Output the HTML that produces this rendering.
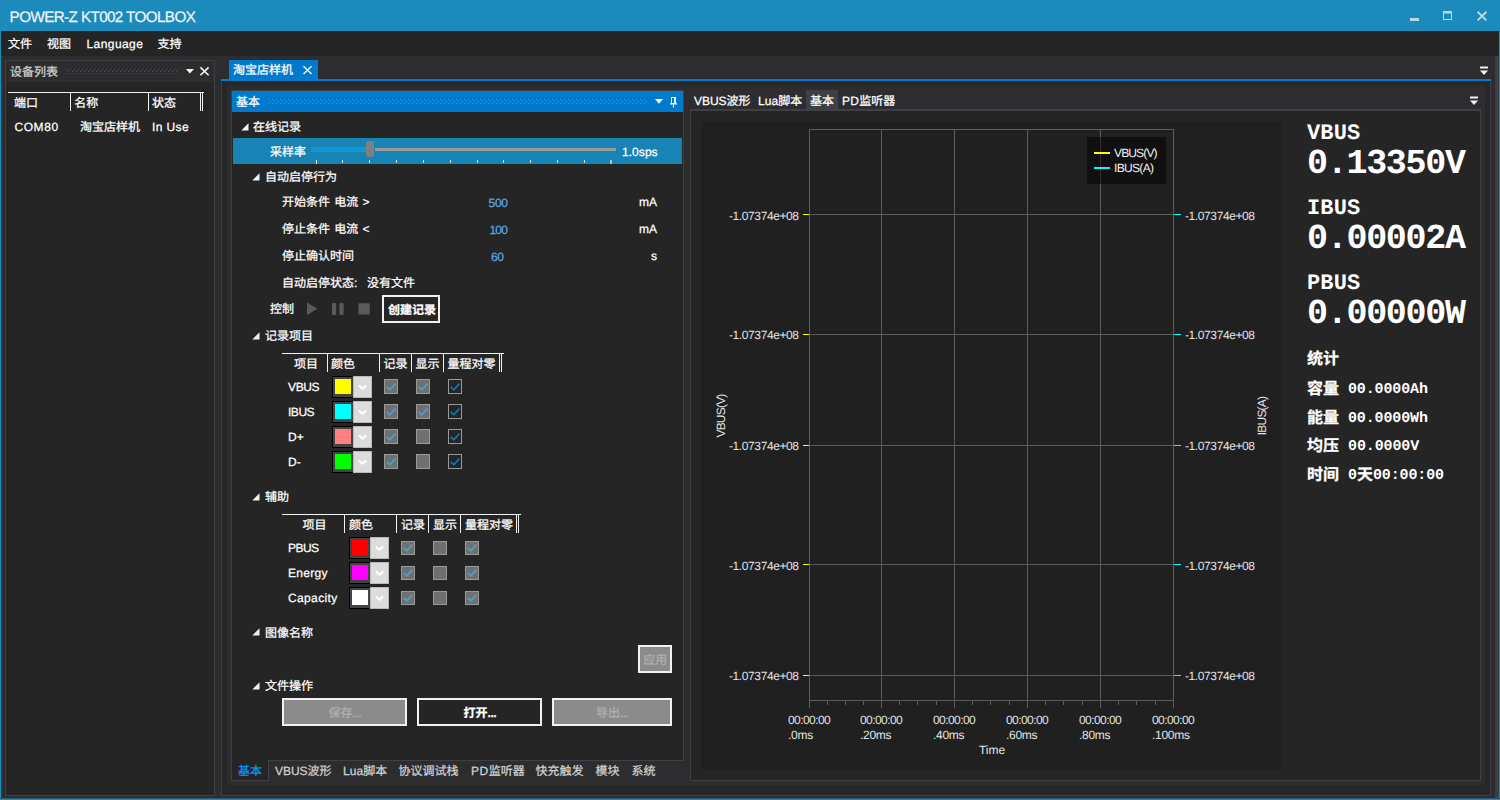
<!DOCTYPE html>
<html lang="zh-CN"><head><meta charset="utf-8"><title>POWER-Z KT002 TOOLBOX</title>
<style>
html,body{margin:0;padding:0}
body{width:1500px;height:800px;overflow:hidden;background:#2d2d30;position:relative;font-family:"Liberation Sans","Noto Sans CJK SC",sans-serif;font-size:12px;color:#f1f1f1;text-rendering:geometricPrecision;-webkit-font-smoothing:antialiased}
body div{position:absolute;box-sizing:border-box}
.t{white-space:nowrap;line-height:0;-webkit-text-stroke:0.25px currentColor}
.z{letter-spacing:0}
.b{font-weight:bold;font-family:"Liberation Sans","Noto Sans CJK SC",sans-serif}
svg.ic{position:absolute;overflow:visible}
.s,.S{display:inline-block;width:0;height:24px}
.S{height:40px}
</style></head><body>
<div style="left:0px;top:0px;width:1500px;height:31px;background:#1c8abb;"></div>
<div class="t" style="top:-2px;font-size:15.2px;color:#eef5f9;left:9.6px;letter-spacing:-0.58px;"><i class="s"></i>POWER-Z KT002 TOOLBOX</div>
<svg class="ic" style="left:1405px;top:6px" width="90" height="20" viewBox="1405 6 90 20"><rect x="1410" y="18" width="9" height="3" fill="#b4daeb"/><path d="M1443 11h9v9h-9z M1444 13.5v5.5h7v-5.5z" fill="#b4daeb" fill-rule="evenodd"/><path d="M1477.6 11.8l8.8 8.6M1486.4 11.8l-8.8 8.6" stroke="#b4daeb" stroke-width="2" fill="none"/></svg>
<div style="left:1px;top:31px;width:1498px;height:25px;background:#252526;"></div>
<div class="t" style="top:24px;font-size:12px;color:#ffffff;left:8px;"><i class="s"></i>文件</div>
<div class="t" style="top:24px;font-size:12px;color:#ffffff;left:47px;"><i class="s"></i>视图</div>
<div class="t" style="top:24px;font-size:12px;color:#ffffff;left:86.5px;letter-spacing:0.42px;"><i class="s"></i>Language</div>
<div class="t" style="top:24px;font-size:12px;color:#ffffff;left:157.5px;"><i class="s"></i>支持</div>
<div style="left:0px;top:31px;width:1px;height:769px;background:#1c8abb;"></div>
<div style="left:1px;top:56px;width:1px;height:743px;background:#2b4350;"></div>
<div style="left:1499px;top:31px;width:1px;height:769px;background:#1c8abb;"></div>
<div style="left:0px;top:798px;width:1500px;height:1px;background:#265a75;"></div>
<div style="left:0px;top:799px;width:1500px;height:1px;background:#1c8abb;"></div>
<div style="left:1495px;top:56px;width:4px;height:742px;background:#3e3e40;"></div>
<div style="left:5px;top:60px;width:210px;height:736px;background:#252526;border:1px solid #3f3f46;"></div>
<div style="left:6px;top:61px;width:208px;height:21px;background:#2d2d30;"></div>
<div class="t" style="top:52px;font-size:12px;color:#d0d0d0;left:10px;"><i class="s"></i>设备列表</div>
<div style="left:66px;top:69px;width:111px;height:5px;background:linear-gradient(90deg,#515156 1px,transparent 1px) 0 0/4px 1px repeat-x,linear-gradient(90deg,#515156 1px,transparent 1px) 2px 2px/4px 1px repeat-x,linear-gradient(90deg,#515156 1px,transparent 1px) 0 4px/4px 1px repeat-x;"></div>
<svg class="ic" style="left:184px;top:64px" width="28" height="14" viewBox="184 64 28 14"><path d="M185.8 69h8.2l-4.1 4.4z" fill="#f4f4f4"/><path d="M200.4 67.4l8.2 7.8M208.6 67.4l-8.2 7.8" stroke="#f6f6f6" stroke-width="1.55" fill="none"/></svg>
<div style="left:8px;top:92px;width:196px;height:1px;background:#f1f1f1;"></div>
<div style="left:70px;top:92px;width:1px;height:19px;background:#f1f1f1;"></div>
<div style="left:148px;top:92px;width:1px;height:19px;background:#f1f1f1;"></div>
<div style="left:200px;top:92px;width:1px;height:19px;background:#f1f1f1;"></div>
<div style="left:202px;top:92px;width:1px;height:19px;background:#f1f1f1;"></div>
<div class="t" style="top:83px;font-size:12px;color:#ffffff;left:14px;"><i class="s"></i>端口</div>
<div class="t" style="top:83px;font-size:12px;color:#ffffff;left:74.3px;"><i class="s"></i>名称</div>
<div class="t" style="top:83px;font-size:12px;color:#ffffff;left:152px;"><i class="s"></i>状态</div>
<div class="t" style="top:107px;font-size:12px;color:#ffffff;left:14.4px;letter-spacing:0.61px;"><i class="s"></i>COM80</div>
<div class="t" style="top:107px;font-size:12px;color:#ffffff;left:80px;"><i class="s"></i>淘宝店样机</div>
<div class="t" style="top:107px;font-size:12px;color:#ffffff;left:152px;letter-spacing:0.38px;"><i class="s"></i>In Use</div>
<div style="left:229px;top:60px;width:89px;height:19px;background:#007acc;"></div>
<div class="t" style="top:50px;font-size:12px;color:#ffffff;left:233px;"><i class="s"></i>淘宝店样机</div>
<svg class="ic" style="left:301px;top:64px" width="14" height="14" viewBox="301 64 14 14"><path d="M303.5 66.3l8 7.7M311.5 66.3l-8 7.7" stroke="#e4f1fb" stroke-width="1.5" fill="none"/></svg>
<div style="left:221px;top:79px;width:1270px;height:2px;background:#007acc;"></div>
<div style="left:221px;top:81px;width:1270px;height:715px;background:#272729;border:1px solid #3f3f46;border-top:none;"></div>
<div style="left:227px;top:86px;width:1258px;height:699px;background:#2d2d30;"></div>
<svg class="ic" style="left:1479px;top:66px" width="10" height="10" viewBox="0 0 10 10"><rect x="1" y="0.5" width="8" height="2" fill="#f1f1f1"/><path d="M1 4.6h8l-4 4.4z" fill="#f1f1f1"/></svg>
<div style="left:231px;top:90px;width:453px;height:671px;background:#252526;border:1px solid #3f3f46;"></div>
<div style="left:232px;top:91px;width:451px;height:21px;background:#007acc;"></div>
<div class="t" style="top:82px;font-size:12px;color:#ffffff;left:236px;"><i class="s"></i>基本</div>
<div style="left:268px;top:99px;width:380px;height:5px;background:linear-gradient(90deg,#3d98d8 1px,transparent 1px) 0 0/4px 1px repeat-x,linear-gradient(90deg,#3d98d8 1px,transparent 1px) 2px 2px/4px 1px repeat-x,linear-gradient(90deg,#3d98d8 1px,transparent 1px) 0 4px/4px 1px repeat-x;"></div>
<svg class="ic" style="left:652px;top:94px" width="30" height="16" viewBox="652 94 30 16"><path d="M655 99h8l-4 4.7z" fill="#fff"/><path d="M671 97h5v6.2h1v1.3h-3v3h-1v-3h-3v-1.3h1z M672 98v5h2v-5z" fill="#fff" fill-rule="evenodd"/></svg>
<svg class="ic" style="left:241px;top:122.6px" width="8" height="8" viewBox="0 0 8 8"><path d="M7.5 0.3V7.5H0.3z" fill="#f1f1f1"/></svg>
<div class="t" style="top:107px;font-size:12px;color:#ffffff;left:253px;"><i class="s"></i>在线记录</div>
<div style="left:233px;top:138px;width:449px;height:26px;background:#1883b5;"></div>
<div class="t" style="top:132px;font-size:12px;color:#ffffff;left:270px;"><i class="s"></i>采样率</div>
<div style="left:375px;top:148px;width:241px;height:3px;background:#9a9a9a;"></div>
<div style="left:311px;top:147px;width:55px;height:5px;background:#1296d4;"></div>
<div style="left:366px;top:141px;width:8px;height:16px;background:#808080;border-radius:2.5px;"></div>
<div style="left:316px;top:160px;width:1px;height:4px;background:#e6eef2;"></div>
<div style="left:342px;top:160px;width:1px;height:3px;background:#cfe3ee;"></div>
<div style="left:369px;top:160px;width:1px;height:3px;background:#cfe3ee;"></div>
<div style="left:396px;top:160px;width:1px;height:3px;background:#cfe3ee;"></div>
<div style="left:423px;top:160px;width:1px;height:3px;background:#cfe3ee;"></div>
<div style="left:450px;top:160px;width:1px;height:3px;background:#cfe3ee;"></div>
<div style="left:477px;top:160px;width:1px;height:3px;background:#cfe3ee;"></div>
<div style="left:503px;top:160px;width:1px;height:3px;background:#cfe3ee;"></div>
<div style="left:530px;top:160px;width:1px;height:3px;background:#cfe3ee;"></div>
<div style="left:557px;top:160px;width:1px;height:3px;background:#cfe3ee;"></div>
<div style="left:584px;top:160px;width:1px;height:3px;background:#cfe3ee;"></div>
<div style="left:610px;top:160px;width:2px;height:4px;background:#a9c4d2;"></div>
<div class="t" style="top:132px;font-size:12px;color:#ffffff;left:622px;letter-spacing:0.05px;"><i class="s"></i>1.0sps</div>
<svg class="ic" style="left:252px;top:173px" width="8" height="8" viewBox="0 0 8 8"><path d="M7.5 0.3V7.5H0.3z" fill="#f1f1f1"/></svg>
<div class="t" style="top:157px;font-size:12px;color:#ffffff;left:265px;"><i class="s"></i>自动启停行为</div>
<div class="t" style="top:182px;font-size:12px;color:#ffffff;left:282px;letter-spacing:0.96px;"><i class="s"></i><span class="z">开始条件</span> <span class="z">电流</span> &gt;</div>
<div class="t" style="top:183px;font-size:12px;color:#5ba6e3;left:488.6px;letter-spacing:-0.32px;"><i class="s"></i>500</div>
<div class="t" style="top:182px;font-size:12px;color:#ffffff;right:843px;"><i class="s"></i>mA</div>
<div class="t" style="top:209px;font-size:12px;color:#ffffff;left:282px;letter-spacing:0.96px;"><i class="s"></i><span class="z">停止条件</span> <span class="z">电流</span> &lt;</div>
<div class="t" style="top:210px;font-size:12px;color:#5ba6e3;left:489.4px;letter-spacing:-0.72px;"><i class="s"></i>100</div>
<div class="t" style="top:209px;font-size:12px;color:#ffffff;right:843px;"><i class="s"></i>mA</div>
<div class="t" style="top:236px;font-size:12px;color:#ffffff;left:282px;"><i class="s"></i>停止确认时间</div>
<div class="t" style="top:237px;font-size:12px;color:#5ba6e3;left:491px;letter-spacing:-0.36px;"><i class="s"></i>60</div>
<div class="t" style="top:236px;font-size:12px;color:#ffffff;right:843px;"><i class="s"></i>s</div>
<div class="t" style="top:263px;font-size:12px;color:#ffffff;left:282px;"><i class="s"></i>自动启停状态:</div>
<div class="t" style="top:263px;font-size:12px;color:#ffffff;left:367px;"><i class="s"></i>没有文件</div>
<div class="t" style="top:289px;font-size:12px;color:#ffffff;left:270px;"><i class="s"></i>控制</div>
<svg class="ic" style="left:305px;top:301px" width="68" height="16" viewBox="305 301 68 16"><path d="M307 302.6l10.4 6.2l-10.4 6.2z" fill="#5a5a5a"/><rect x="332" y="303" width="4.2" height="12" rx="1" fill="#5a5a5a"/><rect x="339.4" y="303" width="4.2" height="12" rx="1" fill="#5a5a5a"/><rect x="358.4" y="303.2" width="11.4" height="11.4" rx="1.2" fill="#5a5a5a"/></svg>
<div style="left:382px;top:295px;width:58px;height:28px;background:#252526;border:2px solid #f1f1f1;"></div>
<div class="t" style="top:290px;font-size:12px;color:#ffffff;left:388px;"><i class="s"></i><span class="b">创建记录</span></div>
<svg class="ic" style="left:252px;top:331.6px" width="8" height="8" viewBox="0 0 8 8"><path d="M7.5 0.3V7.5H0.3z" fill="#f1f1f1"/></svg>
<div class="t" style="top:316px;font-size:12px;color:#ffffff;left:265px;"><i class="s"></i>记录项目</div>
<div style="left:282px;top:353px;width:222px;height:1px;background:#f1f1f1;"></div>
<div style="left:327px;top:353px;width:1px;height:19px;background:#f1f1f1;"></div>
<div style="left:379px;top:353px;width:1px;height:19px;background:#f1f1f1;"></div>
<div style="left:411px;top:353px;width:1px;height:19px;background:#f1f1f1;"></div>
<div style="left:443px;top:353px;width:1px;height:19px;background:#f1f1f1;"></div>
<div style="left:499px;top:353px;width:1px;height:19px;background:#f1f1f1;"></div>
<div style="left:501px;top:353px;width:1px;height:19px;background:#f1f1f1;"></div>
<div class="t" style="top:344px;font-size:12px;color:#ffffff;left:294px;"><i class="s"></i>项目</div>
<div class="t" style="top:344px;font-size:12px;color:#ffffff;left:331px;"><i class="s"></i>颜色</div>
<div class="t" style="top:344px;font-size:12px;color:#ffffff;left:383.4px;"><i class="s"></i>记录</div>
<div class="t" style="top:344px;font-size:12px;color:#ffffff;left:415.4px;"><i class="s"></i>显示</div>
<div class="t" style="top:344px;font-size:12px;color:#ffffff;left:447.4px;"><i class="s"></i>量程对零</div>
<div class="t" style="top:367px;font-size:12px;color:#ffffff;left:288px;letter-spacing:-0.36px;"><i class="s"></i>VBUS</div>
<div style="left:332px;top:376px;width:22px;height:22px;background:#000;"></div>
<div style="left:333px;top:377px;width:20px;height:20px;background:#434343;"></div>
<div style="left:335px;top:379px;width:16px;height:15px;background:#ffff00;"></div>
<div style="left:353px;top:376px;width:19px;height:22px;background:#dcdcdc;border:1px solid #b9b9b9;"></div>
<svg class="ic" style="left:357px;top:384px" width="11" height="7" viewBox="0 0 11 7"><path d="M1.8 1.6l3.7 3l3.7-3" stroke="#fff" stroke-width="2" fill="none"/></svg>
<div style="left:384px;top:379px;width:14px;height:15px;background:#707070;border:1px solid #9a9a9a;"></div>
<svg class="ic" style="left:384px;top:379px" width="14" height="15" viewBox="0 0 14 15"><path d="M2.8 7.8l3 3l5.6-6.2" stroke="#4aa2cc" stroke-width="1.8" fill="none"/></svg>
<div style="left:416px;top:379px;width:14px;height:15px;background:#707070;border:1px solid #9a9a9a;"></div>
<svg class="ic" style="left:416px;top:379px" width="14" height="15" viewBox="0 0 14 15"><path d="M2.8 7.8l3 3l5.6-6.2" stroke="#4aa2cc" stroke-width="1.8" fill="none"/></svg>
<div style="left:448px;top:379px;width:14px;height:15px;background:#252526;border:1px solid #999;"></div>
<svg class="ic" style="left:448px;top:379px" width="14" height="15" viewBox="0 0 14 15"><path d="M2.8 7.8l3 3l5.6-6.2" stroke="#0e75ab" stroke-width="1.8" fill="none"/></svg>
<div class="t" style="top:392px;font-size:12px;color:#ffffff;left:288px;letter-spacing:-0.47px;"><i class="s"></i>IBUS</div>
<div style="left:332px;top:401px;width:22px;height:22px;background:#000;"></div>
<div style="left:333px;top:402px;width:20px;height:20px;background:#434343;"></div>
<div style="left:335px;top:404px;width:16px;height:15px;background:#00ffff;"></div>
<div style="left:353px;top:401px;width:19px;height:22px;background:#dcdcdc;border:1px solid #b9b9b9;"></div>
<svg class="ic" style="left:357px;top:409px" width="11" height="7" viewBox="0 0 11 7"><path d="M1.8 1.6l3.7 3l3.7-3" stroke="#fff" stroke-width="2" fill="none"/></svg>
<div style="left:384px;top:404px;width:14px;height:15px;background:#707070;border:1px solid #9a9a9a;"></div>
<svg class="ic" style="left:384px;top:404px" width="14" height="15" viewBox="0 0 14 15"><path d="M2.8 7.8l3 3l5.6-6.2" stroke="#4aa2cc" stroke-width="1.8" fill="none"/></svg>
<div style="left:416px;top:404px;width:14px;height:15px;background:#707070;border:1px solid #9a9a9a;"></div>
<svg class="ic" style="left:416px;top:404px" width="14" height="15" viewBox="0 0 14 15"><path d="M2.8 7.8l3 3l5.6-6.2" stroke="#4aa2cc" stroke-width="1.8" fill="none"/></svg>
<div style="left:448px;top:404px;width:14px;height:15px;background:#252526;border:1px solid #999;"></div>
<svg class="ic" style="left:448px;top:404px" width="14" height="15" viewBox="0 0 14 15"><path d="M2.8 7.8l3 3l5.6-6.2" stroke="#0e75ab" stroke-width="1.8" fill="none"/></svg>
<div class="t" style="top:417px;font-size:12px;color:#ffffff;left:288px;"><i class="s"></i>D+</div>
<div style="left:332px;top:426px;width:22px;height:22px;background:#000;"></div>
<div style="left:333px;top:427px;width:20px;height:20px;background:#434343;"></div>
<div style="left:335px;top:429px;width:16px;height:15px;background:#ff8080;"></div>
<div style="left:353px;top:426px;width:19px;height:22px;background:#dcdcdc;border:1px solid #b9b9b9;"></div>
<svg class="ic" style="left:357px;top:434px" width="11" height="7" viewBox="0 0 11 7"><path d="M1.8 1.6l3.7 3l3.7-3" stroke="#fff" stroke-width="2" fill="none"/></svg>
<div style="left:384px;top:429px;width:14px;height:15px;background:#707070;border:1px solid #9a9a9a;"></div>
<svg class="ic" style="left:384px;top:429px" width="14" height="15" viewBox="0 0 14 15"><path d="M2.8 7.8l3 3l5.6-6.2" stroke="#4aa2cc" stroke-width="1.8" fill="none"/></svg>
<div style="left:416px;top:429px;width:14px;height:15px;background:#707070;border:1px solid #9a9a9a;"></div>
<div style="left:448px;top:429px;width:14px;height:15px;background:#252526;border:1px solid #999;"></div>
<svg class="ic" style="left:448px;top:429px" width="14" height="15" viewBox="0 0 14 15"><path d="M2.8 7.8l3 3l5.6-6.2" stroke="#0e75ab" stroke-width="1.8" fill="none"/></svg>
<div class="t" style="top:442px;font-size:12px;color:#ffffff;left:288px;"><i class="s"></i>D-</div>
<div style="left:332px;top:451px;width:22px;height:22px;background:#000;"></div>
<div style="left:333px;top:452px;width:20px;height:20px;background:#434343;"></div>
<div style="left:335px;top:454px;width:16px;height:15px;background:#00ff00;"></div>
<div style="left:353px;top:451px;width:19px;height:22px;background:#dcdcdc;border:1px solid #b9b9b9;"></div>
<svg class="ic" style="left:357px;top:459px" width="11" height="7" viewBox="0 0 11 7"><path d="M1.8 1.6l3.7 3l3.7-3" stroke="#fff" stroke-width="2" fill="none"/></svg>
<div style="left:384px;top:454px;width:14px;height:15px;background:#707070;border:1px solid #9a9a9a;"></div>
<svg class="ic" style="left:384px;top:454px" width="14" height="15" viewBox="0 0 14 15"><path d="M2.8 7.8l3 3l5.6-6.2" stroke="#4aa2cc" stroke-width="1.8" fill="none"/></svg>
<div style="left:416px;top:454px;width:14px;height:15px;background:#707070;border:1px solid #9a9a9a;"></div>
<div style="left:448px;top:454px;width:14px;height:15px;background:#252526;border:1px solid #999;"></div>
<svg class="ic" style="left:448px;top:454px" width="14" height="15" viewBox="0 0 14 15"><path d="M2.8 7.8l3 3l5.6-6.2" stroke="#0e75ab" stroke-width="1.8" fill="none"/></svg>
<svg class="ic" style="left:252px;top:492.6px" width="8" height="8" viewBox="0 0 8 8"><path d="M7.5 0.3V7.5H0.3z" fill="#f1f1f1"/></svg>
<div class="t" style="top:477px;font-size:12px;color:#ffffff;left:265px;"><i class="s"></i>辅助</div>
<div style="left:282px;top:514px;width:239px;height:1px;background:#f1f1f1;"></div>
<div style="left:344px;top:514px;width:1px;height:19px;background:#f1f1f1;"></div>
<div style="left:396px;top:514px;width:1px;height:19px;background:#f1f1f1;"></div>
<div style="left:428px;top:514px;width:1px;height:19px;background:#f1f1f1;"></div>
<div style="left:460px;top:514px;width:1px;height:19px;background:#f1f1f1;"></div>
<div style="left:516px;top:514px;width:1px;height:19px;background:#f1f1f1;"></div>
<div style="left:518px;top:514px;width:1px;height:19px;background:#f1f1f1;"></div>
<div class="t" style="top:505px;font-size:12px;color:#ffffff;left:302.6px;"><i class="s"></i>项目</div>
<div class="t" style="top:505px;font-size:12px;color:#ffffff;left:349px;"><i class="s"></i>颜色</div>
<div class="t" style="top:505px;font-size:12px;color:#ffffff;left:401px;"><i class="s"></i>记录</div>
<div class="t" style="top:505px;font-size:12px;color:#ffffff;left:433px;"><i class="s"></i>显示</div>
<div class="t" style="top:505px;font-size:12px;color:#ffffff;left:465px;"><i class="s"></i>量程对零</div>
<div class="t" style="top:528px;font-size:12px;color:#ffffff;left:288px;letter-spacing:-0.56px;"><i class="s"></i>PBUS</div>
<div style="left:349px;top:537px;width:22px;height:22px;background:#000;"></div>
<div style="left:350px;top:538px;width:20px;height:20px;background:#434343;"></div>
<div style="left:352px;top:540px;width:16px;height:15px;background:#ff0000;"></div>
<div style="left:370px;top:537px;width:19px;height:22px;background:#dcdcdc;border:1px solid #b9b9b9;"></div>
<svg class="ic" style="left:374px;top:545px" width="11" height="7" viewBox="0 0 11 7"><path d="M1.8 1.6l3.7 3l3.7-3" stroke="#fff" stroke-width="2" fill="none"/></svg>
<div style="left:401px;top:541px;width:14px;height:14px;background:#707070;border:1px solid #9a9a9a;"></div>
<svg class="ic" style="left:401px;top:540px" width="14" height="15" viewBox="0 0 14 15"><path d="M2.8 7.8l3 3l5.6-6.2" stroke="#4aa2cc" stroke-width="1.8" fill="none"/></svg>
<div style="left:433px;top:541px;width:14px;height:14px;background:#707070;border:1px solid #9a9a9a;"></div>
<div style="left:465px;top:541px;width:14px;height:14px;background:#707070;border:1px solid #9a9a9a;"></div>
<svg class="ic" style="left:465px;top:540px" width="14" height="15" viewBox="0 0 14 15"><path d="M2.8 7.8l3 3l5.6-6.2" stroke="#4aa2cc" stroke-width="1.8" fill="none"/></svg>
<div class="t" style="top:553px;font-size:12px;color:#ffffff;left:288px;letter-spacing:0.31px;"><i class="s"></i>Energy</div>
<div style="left:349px;top:562px;width:22px;height:22px;background:#000;"></div>
<div style="left:350px;top:563px;width:20px;height:20px;background:#434343;"></div>
<div style="left:352px;top:565px;width:16px;height:15px;background:#ff00ff;"></div>
<div style="left:370px;top:562px;width:19px;height:22px;background:#dcdcdc;border:1px solid #b9b9b9;"></div>
<svg class="ic" style="left:374px;top:570px" width="11" height="7" viewBox="0 0 11 7"><path d="M1.8 1.6l3.7 3l3.7-3" stroke="#fff" stroke-width="2" fill="none"/></svg>
<div style="left:401px;top:566px;width:14px;height:14px;background:#707070;border:1px solid #9a9a9a;"></div>
<svg class="ic" style="left:401px;top:565px" width="14" height="15" viewBox="0 0 14 15"><path d="M2.8 7.8l3 3l5.6-6.2" stroke="#4aa2cc" stroke-width="1.8" fill="none"/></svg>
<div style="left:433px;top:566px;width:14px;height:14px;background:#707070;border:1px solid #9a9a9a;"></div>
<div style="left:465px;top:566px;width:14px;height:14px;background:#707070;border:1px solid #9a9a9a;"></div>
<svg class="ic" style="left:465px;top:565px" width="14" height="15" viewBox="0 0 14 15"><path d="M2.8 7.8l3 3l5.6-6.2" stroke="#4aa2cc" stroke-width="1.8" fill="none"/></svg>
<div class="t" style="top:578px;font-size:12px;color:#ffffff;left:288px;letter-spacing:0.36px;"><i class="s"></i>Capacity</div>
<div style="left:349px;top:587px;width:22px;height:22px;background:#000;"></div>
<div style="left:350px;top:588px;width:20px;height:20px;background:#434343;"></div>
<div style="left:352px;top:590px;width:16px;height:15px;background:#ffffff;"></div>
<div style="left:370px;top:587px;width:19px;height:22px;background:#dcdcdc;border:1px solid #b9b9b9;"></div>
<svg class="ic" style="left:374px;top:595px" width="11" height="7" viewBox="0 0 11 7"><path d="M1.8 1.6l3.7 3l3.7-3" stroke="#fff" stroke-width="2" fill="none"/></svg>
<div style="left:401px;top:591px;width:14px;height:14px;background:#707070;border:1px solid #9a9a9a;"></div>
<svg class="ic" style="left:401px;top:590px" width="14" height="15" viewBox="0 0 14 15"><path d="M2.8 7.8l3 3l5.6-6.2" stroke="#4aa2cc" stroke-width="1.8" fill="none"/></svg>
<div style="left:433px;top:591px;width:14px;height:14px;background:#707070;border:1px solid #9a9a9a;"></div>
<div style="left:465px;top:591px;width:14px;height:14px;background:#707070;border:1px solid #9a9a9a;"></div>
<svg class="ic" style="left:465px;top:590px" width="14" height="15" viewBox="0 0 14 15"><path d="M2.8 7.8l3 3l5.6-6.2" stroke="#4aa2cc" stroke-width="1.8" fill="none"/></svg>
<svg class="ic" style="left:252px;top:628px" width="8" height="8" viewBox="0 0 8 8"><path d="M7.5 0.3V7.5H0.3z" fill="#f1f1f1"/></svg>
<div class="t" style="top:613px;font-size:12px;color:#ffffff;left:265px;"><i class="s"></i>图像名称</div>
<div style="left:638px;top:645px;width:34px;height:28px;background:#8b8b8b;border:2px solid #f1f1f1;"></div>
<div class="t" style="top:640px;font-size:12px;color:#b0b0b0;left:643.2px;"><i class="s"></i>应用</div>
<svg class="ic" style="left:252px;top:681.6px" width="8" height="8" viewBox="0 0 8 8"><path d="M7.5 0.3V7.5H0.3z" fill="#f1f1f1"/></svg>
<div class="t" style="top:666px;font-size:12px;color:#ffffff;left:265px;"><i class="s"></i>文件操作</div>
<div style="left:282px;top:698px;width:125px;height:28px;background:#8b8b8b;border:2px solid #f1f1f1;"></div>
<div class="t" style="top:693px;font-size:12px;color:#b0b0b0;left:328.6px;letter-spacing:-0.51px;"><i class="s"></i><span class="z">保存</span>...</div>
<div style="left:417px;top:698px;width:125px;height:28px;background:#252526;border:2px solid #f1f1f1;"></div>
<div class="t" style="top:693px;font-size:12px;color:#ffffff;font-weight:bold;left:463.6px;letter-spacing:-0.51px;"><i class="s"></i><span class="z">打开</span>...</div>
<div style="left:552px;top:698px;width:120px;height:28px;background:#8b8b8b;border:2px solid #f1f1f1;"></div>
<div class="t" style="top:693px;font-size:12px;color:#b0b0b0;left:596px;letter-spacing:-0.71px;"><i class="s"></i><span class="z">导出</span>...</div>
<div style="left:231px;top:760px;width:38px;height:21px;background:#252526;border:1px solid #3f3f46;border-top:none;"></div>
<div class="t" style="top:751px;font-size:12px;color:#0a97fa;left:238px;"><i class="s"></i>基本</div>
<div class="t" style="top:751px;font-size:12px;color:#d0d0d0;left:275px;letter-spacing:-0.03px;"><i class="s"></i>VBUS<span class="z">波形</span></div>
<div class="t" style="top:751px;font-size:12px;color:#d0d0d0;left:343px;letter-spacing:0.08px;"><i class="s"></i>Lua<span class="z">脚本</span></div>
<div class="t" style="top:751px;font-size:12px;color:#d0d0d0;left:398.6px;"><i class="s"></i>协议调试栈</div>
<div class="t" style="top:751px;font-size:12px;color:#d0d0d0;left:471px;letter-spacing:0.53px;"><i class="s"></i>PD<span class="z">监听器</span></div>
<div class="t" style="top:751px;font-size:12px;color:#d0d0d0;left:535.6px;"><i class="s"></i>快充触发</div>
<div class="t" style="top:751px;font-size:12px;color:#d0d0d0;left:595.6px;"><i class="s"></i>模块</div>
<div class="t" style="top:751px;font-size:12px;color:#d0d0d0;left:631.6px;"><i class="s"></i>系统</div>
<div class="t" style="top:81px;font-size:12px;color:#ffffff;left:694px;letter-spacing:-0.03px;"><i class="s"></i>VBUS<span class="z">波形</span></div>
<div class="t" style="top:81px;font-size:12px;color:#ffffff;left:758px;letter-spacing:0.08px;"><i class="s"></i>Lua<span class="z">脚本</span></div>
<div style="left:806px;top:90px;width:32px;height:20px;background:#3f3f46;"></div>
<div class="t" style="top:81px;font-size:12px;color:#ffffff;left:810px;"><i class="s"></i>基本</div>
<div class="t" style="top:81px;font-size:12px;color:#ffffff;left:842px;letter-spacing:0.33px;"><i class="s"></i>PD<span class="z">监听器</span></div>
<svg class="ic" style="left:1469px;top:96px" width="10" height="10" viewBox="0 0 10 10"><rect x="1" y="0.5" width="8" height="2" fill="#f1f1f1"/><path d="M1 4.6h8l-4 4.4z" fill="#f1f1f1"/></svg>
<div style="left:690px;top:109px;width:791px;height:672px;background:#252526;border:1px solid #3f3f46;border-top-width:2px;"></div>
<div style="left:701px;top:121px;width:580px;height:648px;background:#202020;"></div>
<svg class="ic" style="left:701px;top:121px" width="580" height="648" viewBox="701 121 580 648" shape-rendering="crispEdges"><rect x="809.5" y="129.5" width="364" height="571" fill="none" stroke="#5c5c5c"/><path d="M881.5 129.5V700.5" stroke="#5c5c5c"/><path d="M954.5 129.5V700.5" stroke="#5c5c5c"/><path d="M1027.5 129.5V700.5" stroke="#5c5c5c"/><path d="M1100.5 129.5V700.5" stroke="#5c5c5c"/><path d="M809.5 214.5H1173.5" stroke="#5c5c5c"/><path d="M803 214.5H809" stroke="#ffff00" stroke-width="1.4"/><path d="M1174 214.5H1181" stroke="#00ffff" stroke-width="1.4"/><path d="M809.5 334.5H1173.5" stroke="#5c5c5c"/><path d="M803 334.5H809" stroke="#ffff00" stroke-width="1.4"/><path d="M1174 334.5H1181" stroke="#00ffff" stroke-width="1.4"/><path d="M809.5 445.5H1173.5" stroke="#5c5c5c"/><path d="M803 445.5H809" stroke="#ffff00" stroke-width="1.4"/><path d="M1174 445.5H1181" stroke="#00ffff" stroke-width="1.4"/><path d="M809.5 564.5H1173.5" stroke="#5c5c5c"/><path d="M803 564.5H809" stroke="#ffff00" stroke-width="1.4"/><path d="M1174 564.5H1181" stroke="#00ffff" stroke-width="1.4"/><path d="M809.5 675.5H1173.5" stroke="#5c5c5c"/><path d="M803 675.5H809" stroke="#ffff00" stroke-width="1.4"/><path d="M1174 675.5H1181" stroke="#00ffff" stroke-width="1.4"/><path d="M809.5 700.5V708" stroke="#5c5c5c"/><path d="M827.5 700.5V704.5" stroke="#5c5c5c"/><path d="M845.5 700.5V704.5" stroke="#5c5c5c"/><path d="M863.5 700.5V704.5" stroke="#5c5c5c"/><path d="M881.5 700.5V708" stroke="#5c5c5c"/><path d="M899.5 700.5V704.5" stroke="#5c5c5c"/><path d="M917.5 700.5V704.5" stroke="#5c5c5c"/><path d="M936.5 700.5V704.5" stroke="#5c5c5c"/><path d="M954.5 700.5V708" stroke="#5c5c5c"/><path d="M972.5 700.5V704.5" stroke="#5c5c5c"/><path d="M990.5 700.5V704.5" stroke="#5c5c5c"/><path d="M1009.5 700.5V704.5" stroke="#5c5c5c"/><path d="M1027.5 700.5V708" stroke="#5c5c5c"/><path d="M1045.5 700.5V704.5" stroke="#5c5c5c"/><path d="M1063.5 700.5V704.5" stroke="#5c5c5c"/><path d="M1082.5 700.5V704.5" stroke="#5c5c5c"/><path d="M1100.5 700.5V708" stroke="#5c5c5c"/><path d="M1118.5 700.5V704.5" stroke="#5c5c5c"/><path d="M1136.5 700.5V704.5" stroke="#5c5c5c"/><path d="M1155.5 700.5V704.5" stroke="#5c5c5c"/><path d="M1173.5 700.5V708" stroke="#5c5c5c"/></svg>
<div class="t" style="top:196px;font-size:12px;color:#e4e4e4;left:729px;letter-spacing:-0.4px;-webkit-text-stroke:0;"><i class="s"></i>-1.07374e+08</div>
<div class="t" style="top:196px;font-size:12px;color:#e4e4e4;left:1185px;letter-spacing:-0.4px;-webkit-text-stroke:0;"><i class="s"></i>-1.07374e+08</div>
<div class="t" style="top:315px;font-size:12px;color:#e4e4e4;left:729px;letter-spacing:-0.4px;-webkit-text-stroke:0;"><i class="s"></i>-1.07374e+08</div>
<div class="t" style="top:315px;font-size:12px;color:#e4e4e4;left:1185px;letter-spacing:-0.4px;-webkit-text-stroke:0;"><i class="s"></i>-1.07374e+08</div>
<div class="t" style="top:426px;font-size:12px;color:#e4e4e4;left:729px;letter-spacing:-0.4px;-webkit-text-stroke:0;"><i class="s"></i>-1.07374e+08</div>
<div class="t" style="top:426px;font-size:12px;color:#e4e4e4;left:1185px;letter-spacing:-0.4px;-webkit-text-stroke:0;"><i class="s"></i>-1.07374e+08</div>
<div class="t" style="top:546px;font-size:12px;color:#e4e4e4;left:729px;letter-spacing:-0.4px;-webkit-text-stroke:0;"><i class="s"></i>-1.07374e+08</div>
<div class="t" style="top:546px;font-size:12px;color:#e4e4e4;left:1185px;letter-spacing:-0.4px;-webkit-text-stroke:0;"><i class="s"></i>-1.07374e+08</div>
<div class="t" style="top:656px;font-size:12px;color:#e4e4e4;left:729px;letter-spacing:-0.4px;-webkit-text-stroke:0;"><i class="s"></i>-1.07374e+08</div>
<div class="t" style="top:656px;font-size:12px;color:#e4e4e4;left:1185px;letter-spacing:-0.4px;-webkit-text-stroke:0;"><i class="s"></i>-1.07374e+08</div>
<div class="t" style="top:700px;font-size:12px;color:#e4e4e4;left:788px;letter-spacing:-0.56px;-webkit-text-stroke:0;"><i class="s"></i>00:00:00</div>
<div class="t" style="top:715px;font-size:12px;color:#e4e4e4;left:788px;letter-spacing:-0.27px;-webkit-text-stroke:0;"><i class="s"></i>.0ms</div>
<div class="t" style="top:700px;font-size:12px;color:#e4e4e4;left:860px;letter-spacing:-0.56px;-webkit-text-stroke:0;"><i class="s"></i>00:00:00</div>
<div class="t" style="top:715px;font-size:12px;color:#e4e4e4;left:860px;letter-spacing:-0.27px;-webkit-text-stroke:0;"><i class="s"></i>.20ms</div>
<div class="t" style="top:700px;font-size:12px;color:#e4e4e4;left:933px;letter-spacing:-0.56px;-webkit-text-stroke:0;"><i class="s"></i>00:00:00</div>
<div class="t" style="top:715px;font-size:12px;color:#e4e4e4;left:933px;letter-spacing:-0.27px;-webkit-text-stroke:0;"><i class="s"></i>.40ms</div>
<div class="t" style="top:700px;font-size:12px;color:#e4e4e4;left:1006px;letter-spacing:-0.56px;-webkit-text-stroke:0;"><i class="s"></i>00:00:00</div>
<div class="t" style="top:715px;font-size:12px;color:#e4e4e4;left:1006px;letter-spacing:-0.27px;-webkit-text-stroke:0;"><i class="s"></i>.60ms</div>
<div class="t" style="top:700px;font-size:12px;color:#e4e4e4;left:1079px;letter-spacing:-0.56px;-webkit-text-stroke:0;"><i class="s"></i>00:00:00</div>
<div class="t" style="top:715px;font-size:12px;color:#e4e4e4;left:1079px;letter-spacing:-0.27px;-webkit-text-stroke:0;"><i class="s"></i>.80ms</div>
<div class="t" style="top:700px;font-size:12px;color:#e4e4e4;left:1152px;letter-spacing:-0.56px;-webkit-text-stroke:0;"><i class="s"></i>00:00:00</div>
<div class="t" style="top:715px;font-size:12px;color:#e4e4e4;left:1152px;letter-spacing:-0.27px;-webkit-text-stroke:0;"><i class="s"></i>.100ms</div>
<div class="t" style="top:730px;font-size:12px;color:#e4e4e4;left:979px;letter-spacing:-0.01px;-webkit-text-stroke:0;"><i class="s"></i>Time</div>
<div class="t" style="-webkit-text-stroke:0;color:#e4e4e4;left:721px;top:415.5px;line-height:14px;transform:translate(-50%,-50%) rotate(-90deg);letter-spacing:-0.8px">VBUS(V)</div>
<div class="t" style="-webkit-text-stroke:0;color:#e4e4e4;left:1261.5px;top:415.5px;line-height:14px;transform:translate(-50%,-50%) rotate(-90deg);letter-spacing:-0.8px">IBUS(A)</div>
<div style="left:1087px;top:137px;width:79px;height:47px;background:rgba(0,0,0,.5);"></div>
<div style="left:1094px;top:152px;width:16px;height:2px;background:#ffff00;"></div>
<div style="left:1094px;top:167px;width:16px;height:2px;background:#00ffff;"></div>
<div class="t" style="top:133px;font-size:12px;color:#f0f0f0;left:1114px;letter-spacing:-0.85px;-webkit-text-stroke:0;"><i class="s"></i>VBUS(V)</div>
<div class="t" style="top:148px;font-size:12px;color:#f0f0f0;left:1114px;letter-spacing:-0.67px;-webkit-text-stroke:0;"><i class="s"></i>IBUS(A)</div>
<div class="t" style="top:99px;font-size:22px;color:#ffffff;font-family:'Liberation Mono',monospace;font-weight:bold;left:1307px;letter-spacing:0.13px;-webkit-text-stroke:0;"><i class="S"></i>VBUS</div>
<div class="t" style="top:133px;font-size:35px;color:#ffffff;font-family:'Liberation Mono',monospace;font-weight:bold;left:1307px;letter-spacing:-1.29px;-webkit-text-stroke:0;"><i class="S"></i>0.13350V</div>
<div class="t" style="top:174px;font-size:22px;color:#ffffff;font-family:'Liberation Mono',monospace;font-weight:bold;left:1307px;letter-spacing:0.13px;-webkit-text-stroke:0;"><i class="S"></i>IBUS</div>
<div class="t" style="top:208px;font-size:35px;color:#ffffff;font-family:'Liberation Mono',monospace;font-weight:bold;left:1307px;letter-spacing:-1.29px;-webkit-text-stroke:0;"><i class="S"></i>0.00002A</div>
<div class="t" style="top:249px;font-size:22px;color:#ffffff;font-family:'Liberation Mono',monospace;font-weight:bold;left:1307px;letter-spacing:0.13px;-webkit-text-stroke:0;"><i class="S"></i>PBUS</div>
<div class="t" style="top:283px;font-size:35px;color:#ffffff;font-family:'Liberation Mono',monospace;font-weight:bold;left:1307px;letter-spacing:-1.29px;-webkit-text-stroke:0;"><i class="S"></i>0.00000W</div>
<div class="t" style="top:340px;font-size:16px;color:#ffffff;left:1307px;"><i class="s"></i><span class="b">统计</span></div>
<div class="t" style="top:370px;font-size:16px;color:#ffffff;left:1307px;"><i class="s"></i><span class="b">容量</span></div>
<div class="t" style="top:369px;font-size:15px;color:#ffffff;font-family:'Liberation Mono',monospace;font-weight:bold;left:1348px;letter-spacing:-0.13px;-webkit-text-stroke:0;"><i class="s"></i>00.0000Ah</div>
<div class="t" style="top:399px;font-size:16px;color:#ffffff;left:1307px;"><i class="s"></i><span class="b">能量</span></div>
<div class="t" style="top:398px;font-size:15px;color:#ffffff;font-family:'Liberation Mono',monospace;font-weight:bold;left:1348px;letter-spacing:-0.13px;-webkit-text-stroke:0;"><i class="s"></i>00.0000Wh</div>
<div class="t" style="top:427px;font-size:16px;color:#ffffff;left:1307px;"><i class="s"></i><span class="b">均压</span></div>
<div class="t" style="top:426px;font-size:15px;color:#ffffff;font-family:'Liberation Mono',monospace;font-weight:bold;left:1348px;letter-spacing:-0.12px;-webkit-text-stroke:0;"><i class="s"></i>00.0000V</div>
<div class="t" style="top:456px;font-size:16px;color:#ffffff;left:1307px;"><i class="s"></i><span class="b">时间</span></div>
<div class="t" style="top:455px;font-size:15px;color:#ffffff;font-family:'Liberation Mono',monospace;font-weight:bold;left:1348px;letter-spacing:0.38px;-webkit-text-stroke:0;"><i class="s"></i>0</div>
<div class="t" style="top:456px;font-size:16px;color:#ffffff;left:1357px;"><i class="s"></i><span class="b">天</span></div>
<div class="t" style="top:455px;font-size:15px;color:#ffffff;font-family:'Liberation Mono',monospace;font-weight:bold;left:1373px;letter-spacing:-0.14px;-webkit-text-stroke:0;"><i class="s"></i>00:00:00</div>
</body></html>
